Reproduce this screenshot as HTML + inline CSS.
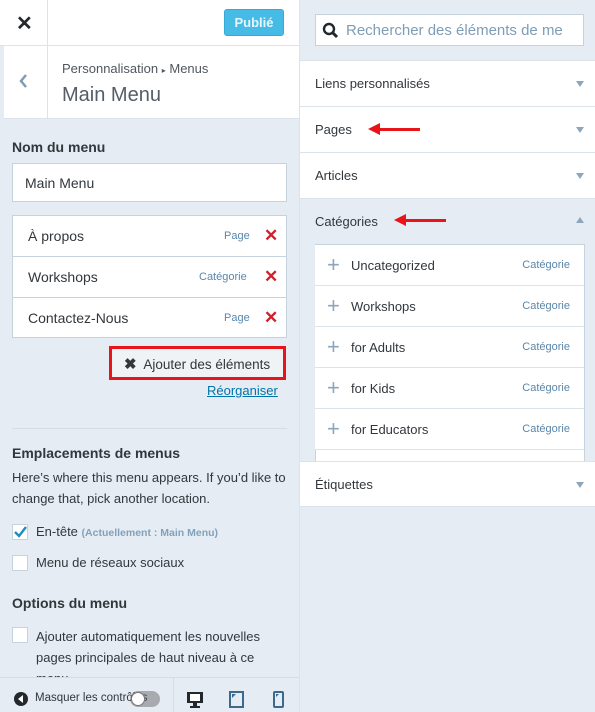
<!DOCTYPE html>
<html><head><meta charset="utf-8"><style>
*{box-sizing:border-box;margin:0;padding:0}
body{width:595px;height:712px;overflow:hidden;background:#e5ecf3;font-family:"Liberation Sans",sans-serif;color:#32373c;position:relative}
.a{position:absolute}
.l{left:0;top:0;width:300px;height:712px;background:#e5ecf3;border-right:1px solid #dce3ea;overflow:hidden}
.row{position:absolute;left:12px;width:275px;height:42px;background:#fff;border:1px solid #c6d3df;font-size:14px}
.row span{position:absolute;top:12px}
.t{font-size:11px;color:#5a87ab}
.x{color:#d0202a;font-size:17px;font-weight:bold}
.cb{position:absolute;left:12px;width:16px;height:16px;background:#fff;border:1px solid #c6d3df}
.rr{position:absolute;left:300px;width:295px;height:46px;background:#fff;border-bottom:1px solid #dce3ea;font-size:13px}
.rr span{position:absolute;left:15px;top:15px}
.tri{position:absolute;right:11px;top:20px;width:0;height:0;border-left:4px solid transparent;border-right:4px solid transparent;border-top:6px solid #8ca6bb}
.ci{position:absolute;left:315px;width:269px;height:41px;background:#fff;border-bottom:1px solid #dce3ea;font-size:13px}
.ci .p{position:absolute;left:12px;top:11px;color:#8ca6bb;font-size:22px;line-height:18px;font-weight:300}
.ci .n{position:absolute;left:36px;top:13px}
.ci .c{position:absolute;right:14px;top:14px;font-size:11px;color:#5a87ab}
.arrow{position:absolute;height:3px;background:#e8141a}
.arrow:before{content:"";position:absolute;left:-10px;top:-5px;border-top:6px solid transparent;border-bottom:6px solid transparent;border-right:12px solid #e8141a}
</style></head><body>
<div class="a l">
  <div class="a" style="left:0;top:0;width:300px;height:46px;background:#fff;border-bottom:1px solid #dce3ea"></div>
  <div class="a" style="left:47px;top:0;width:1px;height:46px;background:#dce3ea"></div>
  <div class="a" style="left:16px;top:11px;font-size:20px;font-weight:bold;color:#23282d">✕</div>
  <div class="a" style="left:224px;top:9px;width:60px;height:27px;background:#45bbe6;border:1px solid #38a8d6;border-radius:3px;color:#e6f6fc;font-size:13px;font-weight:bold;text-align:center;line-height:25px">Publié</div>
  <div class="a" style="left:4px;top:46px;width:296px;height:73px;background:#fff;border-bottom:1px solid #dce3ea"></div>
  <div class="a" style="left:47px;top:46px;width:1px;height:72px;background:#dce3ea"></div>
  <svg class="a" style="left:18px;top:74px" width="10" height="14"><path d="M8 1L3 7L8 13" stroke="#7e9db5" stroke-width="2.5" fill="none"/></svg>
  <div class="a" style="left:62px;top:61px;font-size:13px;color:#50575e">Personnalisation <span style="font-size:8px">▸</span> Menus</div>
  <div class="a" style="left:62px;top:84px;font-size:20px;font-weight:300;color:#555d66">Main Menu</div>
  <div class="a" style="left:12px;top:139px;font-size:14px;font-weight:bold">Nom du menu</div>
  <div class="a" style="left:12px;top:163px;width:275px;height:39px;background:#fff;border:1px solid #c6d3df;font-size:14px;padding:11px 12px">Main Menu</div>
  <div class="row" style="top:215px"><span style="left:15px">À propos</span><span class="t" style="left:211px;top:14px">Page</span><span class="x" style="left:251px;top:10px">✕</span></div>
  <div class="row" style="top:256px"><span style="left:15px">Workshops</span><span class="t" style="left:186px;top:14px">Catégorie</span><span class="x" style="left:251px;top:10px">✕</span></div>
  <div class="row" style="top:297px;height:41px"><span style="left:15px">Contactez-Nous</span><span class="t" style="left:211px;top:14px">Page</span><span class="x" style="left:251px;top:10px">✕</span></div>
  <div class="a" style="left:109px;top:346px;width:177px;height:34px;border:3px solid #e8141a;background:#f0f3f6;font-size:13.5px;padding:6px 0 0 12px"><b style="font-size:15px">✖</b>&nbsp; Ajouter des éléments</div>
  <div class="a" style="left:207px;top:383px;font-size:13px;color:#0073aa;text-decoration:underline">Réorganiser</div>
  <div class="a" style="left:12px;top:428px;width:275px;height:1px;background:#d4dde6"></div>
  <div class="a" style="left:12px;top:445px;font-size:14px;font-weight:bold">Emplacements de menus</div>
  <div class="a" style="left:12px;top:467px;font-size:13px;line-height:21px;width:275px">Here’s where this menu appears. If you’d like to change that, pick another location.</div>
  <div class="cb" style="top:524px"><svg width="14" height="14" style="position:absolute;left:0;top:0"><path d="M2 7L6 11L13 2" stroke="#1e8cbe" stroke-width="2.4" fill="none"/></svg></div>
  <div class="a" style="left:36px;top:524px;font-size:13px">En-tête <span style="font-size:10.5px;color:#82a2bc;font-weight:bold">(Actuellement : Main Menu)</span></div>
  <div class="cb" style="top:555px"></div>
  <div class="a" style="left:36px;top:555px;font-size:13px">Menu de réseaux sociaux</div>
  <div class="a" style="left:12px;top:595px;font-size:14px;font-weight:bold">Options du menu</div>
  <div class="cb" style="top:627px"></div>
  <div class="a" style="left:36px;top:626px;font-size:13px;line-height:21px;width:240px">Ajouter automatiquement les nouvelles pages principales de haut niveau à ce menu</div>
  <div class="a" style="left:0;top:677px;width:300px;height:35px;background:#e5ecf3;border-top:1px solid #d4dde6"></div>
  <div class="a" style="left:173px;top:677px;width:1px;height:35px;background:#d4dde6"></div>
  <div class="a" style="left:14px;top:692px;width:14px;height:14px;border-radius:50%;background:#23282d"></div>
  <div class="a" style="left:18px;top:695px;border-top:4px solid transparent;border-bottom:4px solid transparent;border-right:5px solid #fff"></div>
  <div class="a" style="left:35px;top:692px;font-size:11.5px">Masquer les contrôles</div>
  <div class="a" style="left:130px;top:691px;width:30px;height:16px;border-radius:8px;background:rgba(90,90,90,.45)"></div>
  <div class="a" style="left:131px;top:692px;width:14px;height:14px;border-radius:50%;background:#fff;border:1px solid #777"></div>
  <svg class="a" style="left:186px;top:691px" width="18" height="17"><rect x="1" y="1" width="16" height="11" fill="#23282d"/><rect x="4" y="3" width="10" height="7" fill="#fff"/><rect x="7" y="12" width="4" height="3" fill="#23282d"/><rect x="4" y="15" width="10" height="2" fill="#23282d"/></svg>
  <svg class="a" style="left:229px;top:691px" width="15" height="17"><rect x="1" y="1" width="13" height="15" fill="none" stroke="#3b6a8f" stroke-width="2"/><path d="M3 3H7L3 7Z" fill="#3b6a8f"/></svg>
  <svg class="a" style="left:273px;top:691px" width="11" height="17"><rect x="1" y="1" width="9" height="15" rx="1" fill="none" stroke="#3b6a8f" stroke-width="2"/><path d="M3 3H6L3 6Z" fill="#3b6a8f"/></svg>
</div>
<div class="a" style="left:315px;top:14px;width:269px;height:32px;background:#fff;border:1px solid #c6d3df"></div>
<svg class="a" style="left:322px;top:22px" width="17" height="17"><circle cx="7" cy="7" r="5" stroke="#23282d" stroke-width="2.4" fill="none"/><path d="M10.5 10.5L15 15" stroke="#23282d" stroke-width="3"/></svg>
<div class="a" style="left:346px;top:22px;font-size:15px;color:#7e9db5;white-space:nowrap;width:236px;overflow:hidden">Rechercher des éléments de me</div>
<div class="a" style="left:300px;top:60px;width:295px;height:1px;background:#dce3ea"></div>
<div class="rr" style="top:61px"><span>Liens personnalisés</span><i class="tri"></i></div>
<div class="rr" style="top:107px"><span>Pages</span><i class="tri"></i></div>
<div class="rr" style="top:153px"><span>Articles</span><i class="tri"></i></div>
<div class="rr" style="top:199px;background:#e5ecf3;border:0"><span>Catégories</span><i class="tri" style="border-top:0;border-bottom:6px solid #8ca6bb;top:18px"></i></div>
<div class="arrow" style="left:378px;top:128px;width:42px"></div>
<div class="arrow" style="left:404px;top:219px;width:42px"></div>
<div class="a" style="left:315px;top:244px;width:270px;height:217px;background:#fff;border:1px solid #c6d3df;border-bottom:0"></div>
<div class="ci" style="top:245px"><span class="p">+</span><span class="n">Uncategorized</span><span class="c">Catégorie</span></div>
<div class="ci" style="top:286px"><span class="p">+</span><span class="n">Workshops</span><span class="c">Catégorie</span></div>
<div class="ci" style="top:327px"><span class="p">+</span><span class="n">for Adults</span><span class="c">Catégorie</span></div>
<div class="ci" style="top:368px"><span class="p">+</span><span class="n">for Kids</span><span class="c">Catégorie</span></div>
<div class="ci" style="top:409px"><span class="p">+</span><span class="n">for Educators</span><span class="c">Catégorie</span></div>
<div class="rr" style="top:461px;border-top:1px solid #dce3ea"><span>Étiquettes</span><i class="tri"></i></div>
</body></html>
